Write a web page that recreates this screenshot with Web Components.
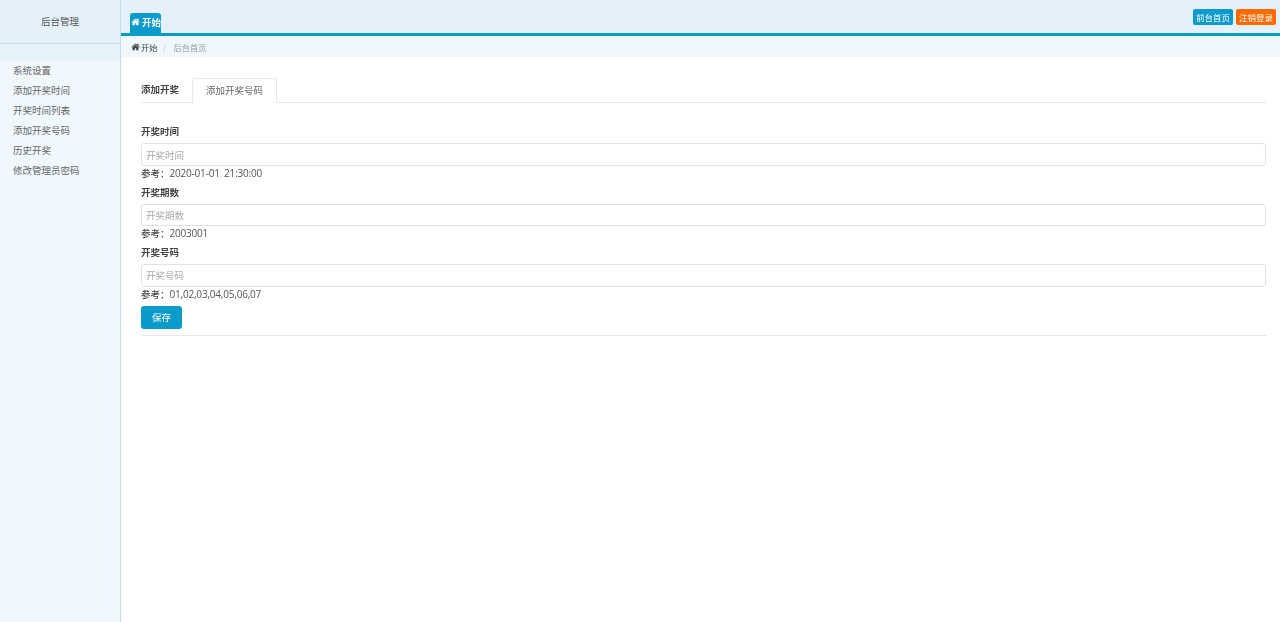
<!DOCTYPE html>
<html lang="zh">
<head>
<meta charset="utf-8">
<title>后台管理</title>
<style>
   html, body { margin: 0; height: 100%; background: #fff; }
   body { font-family: "Open Sans", "Noto Sans CJK SC", sans-serif; color: #444; }
</style>
</head>
<body>
<admin-shell>
   <side-bar slot="side" title-text="后台管理">
      <side-link>系统设置</side-link>
      <side-link>添加开奖时间</side-link>
      <side-link>开奖时间列表</side-link>
      <side-link>添加开奖号码</side-link>
      <side-link>历史开奖</side-link>
      <side-link>修改管理员密码</side-link>
   </side-bar>
   <top-bar slot="top"></top-bar>
   <crumb-bar slot="top"></crumb-bar>
   <tab-strip title-text="添加开奖" tab="添加开奖号码"></tab-strip>
   <form-field label="开奖时间" hint="2020-01-01 21:30:00"></form-field>
   <form-field label="开奖期数" hint="2003001"></form-field>
   <form-field label="开奖号码" hint="01,02,03,04,05,06,07"></form-field>
   <save-row></save-row>
</admin-shell>

<script>
const
   CJK = `"Noto Sans CJK SC", sans-serif`,
   HOME = `<svg viewBox="64 128 1664 1536" width="9" height="8" aria-hidden="true"><path fill="currentColor" d="M1472 992v480q0 26-19 45t-45 19h-384v-384H768v384H384q-26 0-45-19t-19-45V992q0-1 .5-3t.5-3l575-474 575 474q1 2 1 6zm223-69-62 74q-8 9-21 11h-3q-13 0-21-7L896 424 204 1001q-12 8-24 7-13-2-21-11l-62-74q-8-10-7-23.5T101 878l719-599q32-26 76-26t76 26l244 204V288q0-14 9-23t23-9h192q14 0 23 9t9 23v408l219 182q10 8 11 21.5t-7 23.5z"/></svg>`
;

/* == [ shell ]
== == == == == == == == == */
class AdminShell extends HTMLElement {
   constructor() {
      super();
      this.attachShadow( { mode: "open" } ).innerHTML = `
         <style>
            :host { display: flex; height: 622px; overflow: hidden; filter: blur(.3px); }
            main { flex: 1; min-width: 0; display: flex; flex-direction: column; }
            section { padding: 21px 14px 0 20px; }
         </style>
         <slot name="side"></slot>
         <main>
            <slot name="top"></slot>
            <section><slot></slot></section>
         </main>
      `;
   }
}
customElements.define( "admin-shell", AdminShell );

/* == [ sidebar ]
== == == == == == == == == */
class SideBar extends HTMLElement {
   constructor() {
      super();
      this.attachShadow( { mode: "open" } ).innerHTML = `
         <style>
            :host { display: flex; flex-direction: column; box-sizing: border-box; width: 121px; flex: none; background: #f0f8fd; border-right: 1px solid #c3dcec; }
            header { box-sizing: border-box; height: 44px; padding-bottom: 1px; display: flex; align-items: center; justify-content: center; background: #e4f1fa; border-bottom: 1px solid #c3dcec; font: 9.5px ${ CJK }; color: #555; }
            div { height: 17px; background: #e7f3fb; }
            nav { display: flex; flex-direction: column; }
         </style>
         <header>${ this.getAttribute( "title-text" ) }</header>
         <div></div>
         <nav><slot></slot></nav>
      `;
   }
}
customElements.define( "side-bar", SideBar );

class SideLink extends HTMLElement {
   constructor() {
      super();
      this.attachShadow( { mode: "open" } ).innerHTML = `
         <style>
            :host { display: flex; align-items: center; box-sizing: border-box; height: 20px; padding: 0 0 2px 13px; font: 9.5px ${ CJK }; color: #666; }
         </style>
         <slot></slot>
      `;
   }
}
customElements.define( "side-link", SideLink );

/* == [ top ]
== == == == == == == == == */
class TopBar extends HTMLElement {
   constructor() {
      super();
      this.attachShadow( { mode: "open" } ).innerHTML = `
         <style>
            :host { display: flex; justify-content: space-between; box-sizing: border-box; height: 36px; background: #e4f1fa; border-bottom: 3px solid #0a9acb; padding: 0 4px 0 9px; }
            .tab { align-self: flex-end; display: flex; align-items: center; gap: 2px; box-sizing: border-box; width: 31px; height: 20px; overflow: hidden; white-space: nowrap; padding: 0 0 2px 1px; background: #0a9acb; color: #fff; border-radius: 3px 3px 0 0; font: bold 9.5px ${ CJK }; }
            .btns { display: flex; gap: 3px; padding-top: 9px; }
            .btn { display: flex; align-items: center; justify-content: center; height: 16px; width: 40px; border-radius: 2px; color: #fff; font: 8.5px ${ CJK }; }
         </style>
         <div class="tab">${ HOME }开始</div>
         <div class="btns">
            <div class="btn" style="background:#0a9acb">前台首页</div>
            <div class="btn" style="background:#ff6a00">注销登录</div>
         </div>
      `;
   }
}
customElements.define( "top-bar", TopBar );

class CrumbBar extends HTMLElement {
   constructor() {
      super();
      this.attachShadow( { mode: "open" } ).innerHTML = `
         <style>
            :host { display: flex; align-items: center; box-sizing: border-box; height: 21px; padding-left: 10px; background: #f0f8fd; font: 8.3px ${ CJK }; color: #444; }
            span { display: flex; align-items: center; gap: 1px; }
            i { font-style: normal; color: #ccc; margin: 0 7px 0 5.5px; }
            b { font-weight: normal; color: #999; }
         </style>
         <span>${ HOME }开始</span><i>/</i><b>后台首页</b>
      `;
   }
}
customElements.define( "crumb-bar", CrumbBar );

/* == [ tabs ]
== == == == == == == == == */
class TabStrip extends HTMLElement {
   constructor() {
      super();
      this.attachShadow( { mode: "open" } ).innerHTML = `
         <style>
            :host { display: flex; height: 24px; border-bottom: 1px solid #e8e8e8; margin-bottom: 23.4px; font: 9.5px ${ CJK }; }
            b { width: 51px; padding-top: 4px; color: #444; }
            div { box-sizing: border-box; display: flex; align-items: center; justify-content: center; width: 85px; height: 25px; padding-bottom: 2px; background: #fff; border: 1px solid #e8e8e8; border-bottom: 0; border-radius: 3px 3px 0 0; color: #666; }
         </style>
         <b>${ this.getAttribute( "title-text" ) }</b>
         <div>${ this.getAttribute( "tab" ) }</div>
      `;
   }
}
customElements.define( "tab-strip", TabStrip );

/* == [ form ]
== == == == == == == == == */
class FormField extends HTMLElement {
   constructor() {
      super();
      const label = this.getAttribute( "label" );
      this.attachShadow( { mode: "open" } ).innerHTML = `
         <style>
            :host { display: flex; flex-direction: column; height: 59px; margin-bottom: 1.35px; font: 9.5px ${ CJK }; color: #444; }
            label { height: 17px; line-height: 11px; font-weight: bold; }
            input { box-sizing: border-box; width: 100%; height: 22.7px; margin: 0; padding: 0 4px; border: 1px solid #e2e2e2; border-radius: 3px; outline: 0; background: #fff; font: 9.5px ${ CJK }; }
            input::placeholder { color: #aaa; opacity: 1; }
            p { margin: 0; height: 14px; line-height: 12px; white-space: nowrap; font-weight: 500; }
            p span { font: 10px "Open Sans", ${ CJK }; letter-spacing: -.2px; word-spacing: 2px; color: #555; }
         </style>
         <label>${ label }</label>
         <input placeholder="${ label }">
         <p>参考：<span>${ this.getAttribute( "hint" ) }</span></p>
      `;
   }
}
customElements.define( "form-field", FormField );

class SaveRow extends HTMLElement {
   constructor() {
      super();
      this.attachShadow( { mode: "open" } ).innerHTML = `
         <style>
            :host { display: block; margin-top: -1px; border-bottom: 1px solid #e8e8e8; padding-bottom: 6px; }
            button { display: block; box-sizing: border-box; width: 41px; height: 23px; padding: 0 0 2px; border: 0; border-radius: 3px; background: #0a9acb; color: #fff; font: 9.5px ${ CJK }; }
         </style>
         <button type="button">保存</button>
      `;
   }
}
customElements.define( "save-row", SaveRow );
</script>
</body>
</html>
